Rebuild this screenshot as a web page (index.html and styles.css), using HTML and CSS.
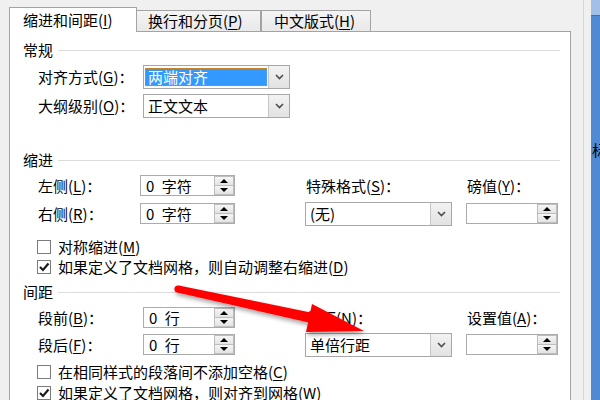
FILE: index.html
```html
<!DOCTYPE html>
<html lang="zh-CN">
  <head>
    <meta charset="UTF-8" />
    <title>段落</title>
    <link rel="stylesheet" href="styles.css">
  </head>
  <body>
    <div class="screen">
      <div class="dialog">
        <div class="tabs">
          <div class="tab active">缩进和间距(<u>I</u>)</div>
          <div class="tab tab-two">换行和分页(<u>P</u>)</div>
          <div class="tab tab-three">中文版式(<u>H</u>)</div>
        </div>

        <div class="panel">
          <!-- 常规 -->
          <div class="group-title">常规</div>
          <div class="general">
            <span class="label">对齐方式(<u>G</u>)：</span>
            <div class="select wide">
              <span class="value"><span class="selected">两端对齐</span></span>
              <span class="drop"><svg width="9" height="6" viewBox="0 0 9 6"><polyline points="1,1 4.5,4.5 8,1" fill="none" stroke="#4d4d4d" stroke-width="1.6"/></svg></span>
            </div>
            <span class="label">大纲级别(<u>O</u>)：</span>
            <div class="select">
              <span class="value">正文文本</span>
              <span class="drop"><svg width="9" height="6" viewBox="0 0 9 6"><polyline points="1,1 4.5,4.5 8,1" fill="none" stroke="#4d4d4d" stroke-width="1.6"/></svg></span>
            </div>
          </div>

          <!-- 缩进 -->
          <div class="group-title second">缩进</div>
          <div class="fields indent">
            <span class="label">左侧(<u>L</u>)：</span>
            <div class="spinbox"><span class="num">0 字符</span><span class="spin"><span class="up"></span><span class="down"></span></span></div>
            <span class="label col-mid">特殊格式(<u>S</u>)：</span>
            <span class="label col-right">磅值(<u>Y</u>)：</span>

            <span class="label">右侧(<u>R</u>)：</span>
            <div class="spinbox"><span class="num">0 字符</span><span class="spin"><span class="up"></span><span class="down"></span></span></div>
            <div class="select col-mid">
              <span class="value">(无)</span>
              <span class="drop"><svg width="9" height="6" viewBox="0 0 9 6"><polyline points="1,1 4.5,4.5 8,1" fill="none" stroke="#4d4d4d" stroke-width="1.6"/></svg></span>
            </div>
            <div class="spinbox col-right"><span class="num"></span><span class="spin"><span class="up"></span><span class="down"></span></span></div>
          </div>
          <div class="checks first-checks">
            <div class="check"><span class="box"></span><span>对称缩进(<u>M</u>)</span></div>
            <div class="check"><span class="box"><svg width="12" height="12" viewBox="0 0 12 12"><path d="M2 6 L5 9 L10.5 2.5" fill="none" stroke="#1a1a1a" stroke-width="2.2"/></svg></span><span>如果定义了文档网格，则自动调整右缩进(<u>D</u>)</span></div>
          </div>

          <!-- 间距 -->
          <div class="group-title third">间距</div>
          <div class="fields spacing">
            <span class="label">段前(<u>B</u>)：</span>
            <div class="spinbox"><span class="num">0 行</span><span class="spin"><span class="up"></span><span class="down"></span></span></div>
            <span class="label col-mid">行距(<u>N</u>)：</span>
            <span class="label col-right">设置值(<u>A</u>)：</span>

            <span class="label">段后(<u>F</u>)：</span>
            <div class="spinbox"><span class="num">0 行</span><span class="spin"><span class="up"></span><span class="down"></span></span></div>
            <div class="select col-mid">
              <span class="value">单倍行距</span>
              <span class="drop"><svg width="9" height="6" viewBox="0 0 9 6"><polyline points="1,1 4.5,4.5 8,1" fill="none" stroke="#4d4d4d" stroke-width="1.6"/></svg></span>
            </div>
            <div class="spinbox col-right"><span class="num"></span><span class="spin"><span class="up"></span><span class="down"></span></span></div>
          </div>
          <div class="checks last-checks">
            <div class="check"><span class="box"></span><span>在相同样式的段落间不添加空格(<u>C</u>)</span></div>
            <div class="check"><span class="box"><svg width="12" height="12" viewBox="0 0 12 12"><path d="M2 6 L5 9 L10.5 2.5" fill="none" stroke="#1a1a1a" stroke-width="2.2"/></svg></span><span>如果定义了文档网格，则对齐到网格(<u>W</u>)</span></div>
          </div>
        </div>
      </div>
      <div class="gap"></div>
      <div class="desk"><div class="desk-top"></div><div class="peek">标</div></div>
    </div>

    <!-- red annotation arrow drawn over the dialog -->
    <svg class="arrow" width="600" height="400" viewBox="0 0 600 400">
      <defs>
        <filter id="shadow" x="-10%" y="-30%" width="120%" height="160%">
          <feDropShadow dx="1.5" dy="3" stdDeviation="2" flood-color="#000" flood-opacity="0.35"/>
        </filter>
      </defs>
      <g filter="url(#shadow)" fill="#ff0000">
        <circle cx="178" cy="289" r="3.6"/>
        <polygon points="178.8,285.5 313.1,313.1 310.9,322.9 177.2,292.5"/>
        <polygon points="312,304 364,331 306,332"/>
      </g>
    </svg>
  </body>
</html>
```

FILE: styles.css
```css
/* Page */
html,
body {
  margin: 0;
  background: #f0f0f0;
}
body {
  width: 600px;
  height: 400px;
  overflow: hidden;
  position: relative;
  font-family: "Noto Sans CJK SC", "Noto Sans", sans-serif;
  font-size: 15px;
  line-height: 18px;
  color: #000;
}
u {
  text-decoration-thickness: 1px;
  text-underline-offset: 2px;
}
.screen {
  display: grid;
  grid-template-columns: 584px 7px 9px;
  height: 400px;
}
/* Dialog frame */
.dialog {
  box-sizing: border-box;
  padding: 7px 12px 0 9px;
  border-right: 1px solid #d6d6d6;
  overflow: hidden;
}
/* Blue window behind the dialog */
.desk {
  background: #4f8bd4;
  overflow: hidden;
}
.desk-top {
  height: 15px;
  background: #a2c0e7;
  border-bottom: 1px solid #3f70ad;
}
.peek {
  width: 20px;
  margin-top: 125px;
  margin-left: 1px;
  white-space: nowrap;
}
/* Tabs */
.tabs {
  display: flex;
  align-items: flex-end;
  height: 25px;
  margin-bottom: -1px;
}
.tab {
  box-sizing: border-box;
  height: 21px;
  margin-bottom: 1px;
  border: 1px solid #a3a3a3;
  border-bottom: none;
  background: linear-gradient(#f4f4f4, #e9e9e9);
  display: flex;
  align-items: center;
  white-space: nowrap;
}
.tab.active {
  width: 128px;
  height: 25px;
  margin-bottom: 0;
  padding-left: 13px;
  background: #fff;
  position: relative;
  z-index: 1;
}
.tab-two {
  width: 125px;
  margin-left: -1px;
  padding-left: 11px;
}
.tab-three {
  width: 110px;
  padding-left: 12px;
}
/* Panel */
.panel {
  width: 562px;
  height: 380px;
  box-sizing: border-box;
  border: 1px solid #a3a3a3;
  border-bottom: none;
  background: #fff;
  padding: 9px 10px 0 13px;
}
.group-title {
  display: flex;
  align-items: center;
  gap: 5px;
  height: 18px;
}
.group-title::after {
  content: "";
  flex: 1;
  border-top: 1px solid #dcdcdc;
}
.group-title.second {
  margin-top: 33px;
}
.group-title.third {
  margin-top: 6px;
}
.label {
  white-space: nowrap;
}
/* 常规 rows */
.general {
  display: grid;
  grid-template-columns: 105px 147px;
  grid-template-rows: 24px 24px;
  row-gap: 5px;
  align-items: center;
  margin: 6px 0 0 15px;
}
/* Dropdowns */
.select {
  box-sizing: border-box;
  height: 24px;
  display: flex;
  border: 1px solid #a8a8a8;
  background: #fff;
}
.select .value {
  flex: 1;
  display: flex;
  align-items: center;
  padding-left: 4px;
  white-space: nowrap;
}
.select.wide .value {
  padding: 2px 1px;
}
.selected {
  flex: 1;
  align-self: stretch;
  display: flex;
  align-items: center;
  padding-left: 3px;
  background: #3399ff;
  color: #fff;
  outline: 1px dotted #d08a30;
  outline-offset: -1px;
}
.drop {
  width: 20px;
  border-left: 1px solid #c6c6c6;
  background: linear-gradient(#f2f2f2, #e2e2e2);
  display: flex;
  align-items: center;
  justify-content: center;
}
/* Two-row field grids */
.fields {
  display: grid;
  grid-template-columns: 102px 95px 70px 147px 14px 92px;
  grid-template-rows: 21px 21px;
  row-gap: 7px;
  align-items: center;
  margin: 6px 0 0 15px;
}
.fields.spacing {
  grid-template-columns: 105px 92px 70px 147px 14px 92px;
  row-gap: 6px;
}
.col-mid {
  grid-column: 4;
}
.col-right {
  grid-column: 6;
}
.fields .label.col-mid,
.fields .label.col-right {
  padding-left: 1px;
}
/* Spin boxes */
.spinbox {
  box-sizing: border-box;
  height: 21px;
  display: flex;
  border: 1px solid #ababab;
  background: #fff;
}
.num {
  flex: 1;
  display: flex;
  align-items: center;
  padding-left: 5px;
  word-spacing: 4px;
  white-space: nowrap;
}
.spin {
  width: 20px;
  display: flex;
  flex-direction: column;
}
.spin span {
  flex: 1;
  box-sizing: border-box;
  border: 1px solid #bdbdbd;
  background: linear-gradient(#f5f5f5, #e3e3e3);
  display: flex;
  align-items: center;
  justify-content: center;
}
.spin .down {
  border-top: none;
}
.up::after,
.down::after {
  content: "";
  border-left: 4px solid transparent;
  border-right: 4px solid transparent;
}
.up::after {
  border-bottom: 4px solid #000;
}
.down::after {
  border-top: 4px solid #000;
}
/* Checkboxes */
.checks {
  display: flex;
  flex-direction: column;
  margin-left: 14px;
}
.first-checks {
  margin-top: 13px;
}
.last-checks {
  margin-top: 7px;
  gap: 1px;
}
.check {
  height: 20px;
  display: flex;
  align-items: center;
  gap: 7px;
  white-space: nowrap;
}
.box {
  width: 14px;
  height: 14px;
  box-sizing: border-box;
  border: 1px solid #7c7c7c;
  background: #fff;
  display: flex;
  align-items: center;
  justify-content: center;
}
/* Annotation */
.arrow {
  position: absolute;
  left: 0;
  top: 0;
  pointer-events: none;
}
```
